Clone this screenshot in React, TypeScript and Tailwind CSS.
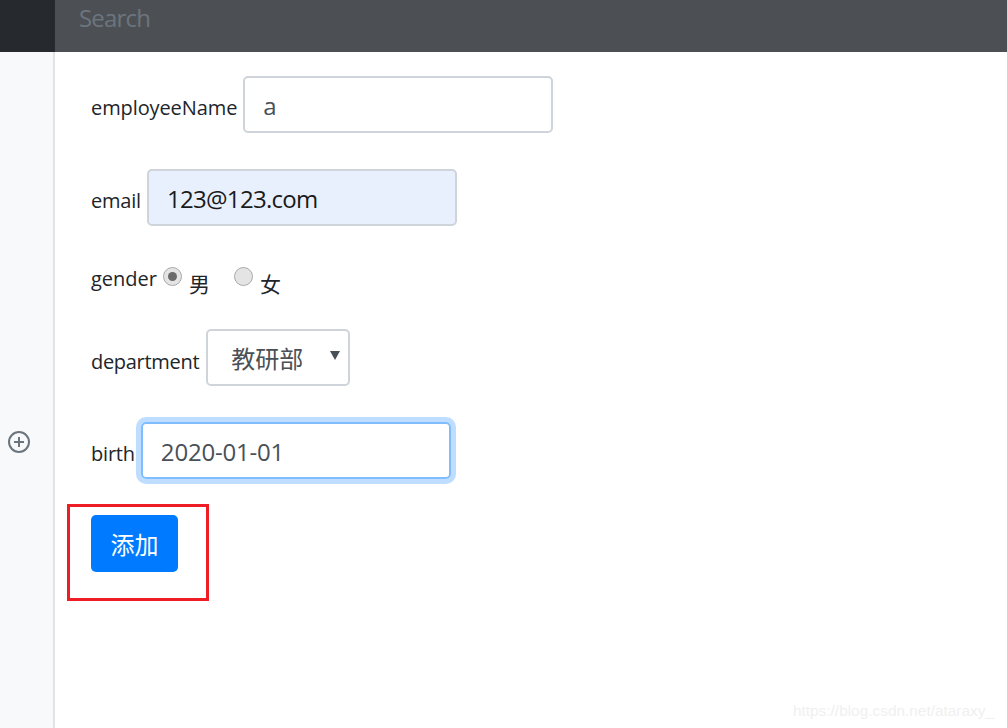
import React from "react";

const inputBase =
  "h-[57px] w-[310px] rounded-[5px] border-2 px-[18px] pt-[2px] text-[24px] outline-none";

export default function App() {
  return (
    <div className="relative flex h-[728px] w-[1007px] flex-col overflow-hidden bg-white text-[20px] text-[#212529] font-['Open_Sans','Noto_Sans_CJK_SC',sans-serif]">
      <header className="flex h-[52px] shrink-0 bg-[#4c5055]">
        <div className="w-[55px] bg-[#26292d]" />
        <div className="flex-1 pl-[24px] pt-[1px] text-[24px] leading-[34px] tracking-[-0.8px] text-[#6c757d]">Search</div>
      </header>
      <div className="flex flex-1">
        <aside className="w-[55px] shrink-0 border-r-2 border-[#e2e3e5] bg-[#f8f9fa] pl-[8px] pt-[379px]">
          <svg width="22" height="22" viewBox="0 0 22 22" fill="none" stroke="#6c757d" strokeWidth="2">
            <circle cx="11" cy="11" r="10" />
            <path d="M11 6v10M6 11h10" />
          </svg>
        </aside>
        <main className="flex flex-1 flex-col items-start pl-[36px] pt-[24px]">
          <form className="flex flex-col items-start">
            <div className="flex h-[57px] items-center gap-[6px]">
              <label className="mt-[6px] leading-[30px] tracking-[-0.1px]">employeeName</label>
              <input className={`${inputBase} border-[#ced4da] text-[#495057]`} defaultValue="a" />
            </div>
            <div className="mt-[36px] flex h-[57px] items-center gap-[6px]">
              <label className="mt-[6px] leading-[30px] tracking-[-0.2px]">email</label>
              <input className={`${inputBase} border-[#ced4da] bg-[#e8f0fe] tracking-[-0.7px] text-[#1a1a1a]`} defaultValue="123@123.com" />
            </div>
            <div className="mt-[36px] flex h-[31px] items-start">
              <label className="mt-[2px] leading-[30px]">gender</label>
              <span className="ml-[6px] mt-[5px] flex h-[19px] w-[19px] items-center justify-center rounded-full border border-[#a9a9a9] bg-[#e4e4e4]">
                <span className="h-[9px] w-[9px] rounded-full bg-[#6b6b6b]" />
              </span>
              <span className="ml-[7px] mt-[8px] text-[21px] leading-[28px]">男</span>
              <span className="ml-[24px] mt-[5px] h-[19px] w-[19px] rounded-full border border-[#a9a9a9] bg-[#e4e4e4]" />
              <span className="ml-[7px] mt-[8px] text-[21px] leading-[28px]">女</span>
            </div>
            <div className="mt-[36px] flex h-[57px] items-center gap-[7px]">
              <label className="mt-[8px] leading-[30px] tracking-[-0.3px]">department</label>
              <div className="flex h-[57px] w-[144px] items-center rounded-[5px] border-2 border-[#ced4da] pl-[23px] pt-[2px] text-[24px] text-[#495057]">
                教研部
                <svg className="ml-[27px] mb-[6px]" width="10" height="9" viewBox="0 0 10 9">
                  <path d="M0 0h10L5 9z" fill="#495057" />
                </svg>
              </div>
            </div>
            <div className="mt-[36px] flex h-[57px] items-center gap-[6px]">
              <label className="mt-[6px] leading-[30px] tracking-[-0.2px]">birth</label>
              <input
                className={`${inputBase} border-[#80bdff] tracking-[-0.2px] text-[#495057] shadow-[0_0_0_5px_#bfdeff]`}
                defaultValue="2020-01-01"
              />
            </div>
            <div className="relative mt-[36px]">
              <button
                type="button"
                className="h-[57px] w-[87px] rounded-[5px] bg-[#007bff] pt-[3px] text-[24px] text-white"
              >
                添加
              </button>
              <div className="pointer-events-none absolute left-[-24px] top-[-11px] h-[97px] w-[142px] border-[3px] border-[#ee1c25]" />
            </div>
          </form>
        </main>
      </div>
      <div className="absolute right-[13px] top-[699px] text-[15.4px] leading-[24px] text-[#f0f0f0] font-['Liberation_Sans',sans-serif]">
        https://blog.csdn.net/ataraxy_
      </div>
    </div>
  );
}
